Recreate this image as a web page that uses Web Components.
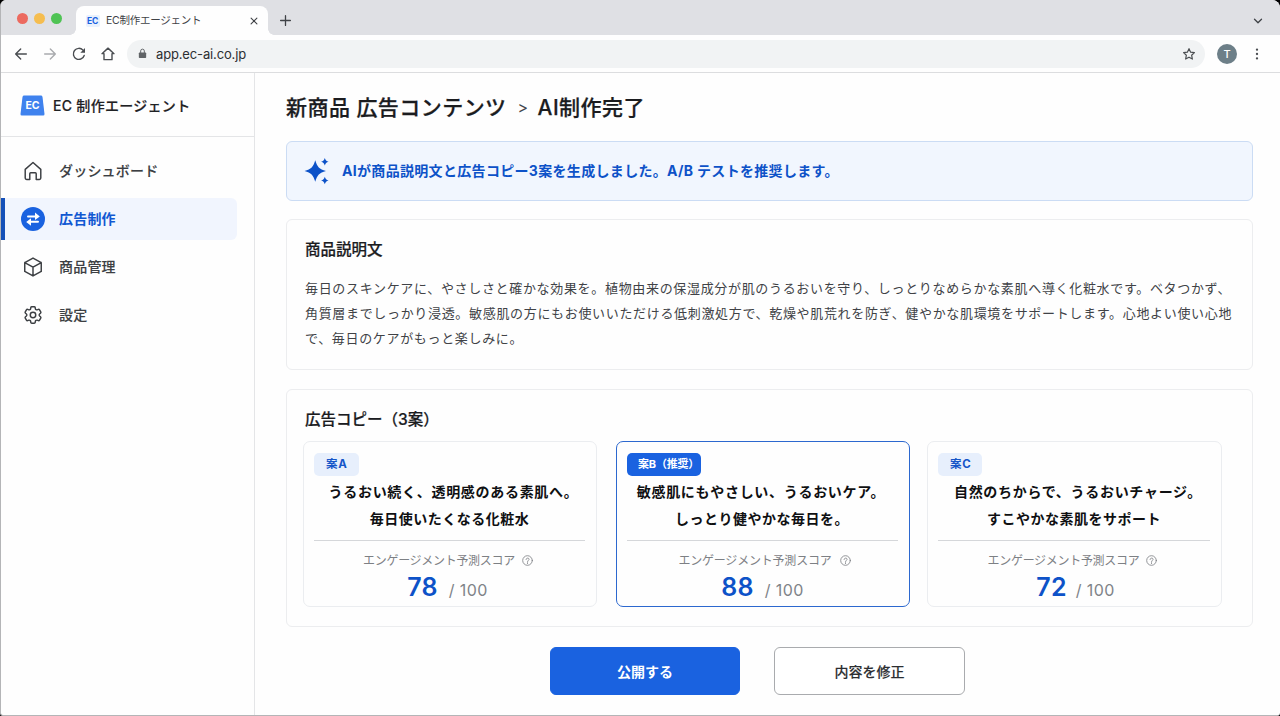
<!DOCTYPE html>
<html lang="ja">
<head>
<meta charset="utf-8">
<title>EC制作エージェント</title>
<style>
  html, body {
    height: 100%;
    margin: 0;
    overflow: hidden;
  }

  body {
    background: #000;
    color: #1f2124;
    font-family: "Inter", "Noto Sans CJK JP", sans-serif;
    font-size: 14px;
  }
</style>
</head>
<body>
<browser-window tab="EC制作エージェント" url="app.ec-ai.co.jp" user="T">
  <app-sidebar slot="sidebar" brand="EC 制作エージェント">
    <nav-item icon="home">ダッシュボード</nav-item>
    <nav-item icon="swap" active>広告制作</nav-item>
    <nav-item icon="box">商品管理</nav-item>
    <nav-item icon="gear">設定</nav-item>
  </app-sidebar>

  <page-title>
    <span>新商品 広告コンテンツ</span>
    <span slot="current">AI制作完了</span>
  </page-title>

  <notice-banner>AIが商品説明文と広告コピー3案を生成しました。A/B テストを推奨します。</notice-banner>

  <content-panel heading="商品説明文" style="--panel-height: 151px">
    <product-text>毎日のスキンケアに、やさしさと確かな効果を。植物由来の保湿成分が肌のうるおいを守り、しっとりなめらかな素肌へ導く化粧水です。ベタつかず、<br>角質層までしっかり浸透。敏感肌の方にもお使いいただける低刺激処方で、乾燥や肌荒れを防ぎ、健やかな肌環境をサポートします。心地よい使い心地<br>で、毎日のケアがもっと楽しみに。</product-text>
  </content-panel>

  <content-panel heading="広告コピー（3案）" style="--panel-height: 238px">
    <copy-list>
      <copy-card badge="案A" score="78">
        <span>うるおい続く、透明感のある素肌へ。</span>
        <span>毎日使いたくなる化粧水</span>
      </copy-card>
      <copy-card badge="案B（推奨）" score="88" recommended>
        <span>敏感肌にもやさしい、うるおいケア。</span>
        <span>しっとり健やかな毎日を。</span>
      </copy-card>
      <copy-card badge="案C" score="72">
        <span>自然のちからで、うるおいチャージ。</span>
        <span>すこやかな素肌をサポート</span>
      </copy-card>
    </copy-list>
  </content-panel>

  <action-bar>
    <ui-button primary>公開する</ui-button>
    <ui-button>内容を修正</ui-button>
  </action-bar>
</browser-window>

<script>
const icons = {
  back: '<path d="M20 12H4M11.5 4.5 4 12l7.5 7.5"/>',
  forward: '<path d="M4 12h16M12.5 4.5 20 12l-7.5 7.5"/>',
  reload: '<path d="M19.8 14.2A8.3 8.3 0 1 1 18 6.2l1.6 1.9"/><path d="M21 3v7h-7z" fill="currentColor" stroke="none"/>',
  house: '<path d="M3 11.5 12 3.2l9 8.3h-3V20.5H6v-9z"/>',
  lock: '<rect x="4" y="10" width="16" height="12" rx="1.6" fill="currentColor" stroke="none"/><path d="M8 10V6.5a4 4 0 0 1 8 0V10"/>',
  star: '<path d="m12 2.8 2.8 6 6.5.8-4.8 4.5 1.3 6.6L12 17.4l-5.8 3.3 1.3-6.6L2.7 9.6l6.5-.8z"/>',
  chevron: '<path d="m5 8.5 7 7 7-7"/>',
  close: '<path d="m5 5 14 14M19 5 5 19"/>',
  plus: '<path d="M12 3v18M3 12h18"/>',
  dots: '<g fill="currentColor" stroke="none"><circle cx="12" cy="4.5" r="2"/><circle cx="12" cy="12" r="2"/><circle cx="12" cy="19.5" r="2"/></g>',
  home: '<path d="M3.5 10.2 12 2.8l8.5 7.4v9.5a1.5 1.5 0 0 1-1.5 1.5h-3.5V15a1 1 0 0 0-1-1h-5a1 1 0 0 0-1 1v6.2H5a1.5 1.5 0 0 1-1.5-1.5z"/>',
  box: '<path d="M12 2.3 21 7.2v9.6L12 21.7 3 16.8V7.2zM3 7.2l9 5 9-5M12 12.2v9.5"/>',
  gear: '<path d="M9.594 3.94c.09-.542.56-.94 1.11-.94h2.593c.55 0 1.02.398 1.11.94l.213 1.281c.063.374.313.686.645.87.074.04.147.083.22.127.325.196.72.257 1.075.124l1.217-.456a1.125 1.125 0 0 1 1.37.49l1.296 2.247a1.125 1.125 0 0 1-.26 1.431l-1.003.827c-.293.241-.438.613-.43.992a7.723 7.723 0 0 1 0 .255c-.008.378.137.75.43.991l1.004.827c.424.35.534.955.26 1.43l-1.298 2.247a1.125 1.125 0 0 1-1.369.491l-1.217-.456c-.355-.133-.75-.072-1.076.124a6.47 6.47 0 0 1-.22.128c-.331.183-.581.495-.644.869l-.213 1.281c-.09.543-.56.94-1.11.94h-2.594c-.55 0-1.019-.398-1.11-.94l-.213-1.281c-.062-.374-.312-.686-.644-.87a6.52 6.52 0 0 1-.22-.127c-.325-.196-.72-.257-1.076-.124l-1.217.456a1.125 1.125 0 0 1-1.369-.49l-1.297-2.247a1.125 1.125 0 0 1 .26-1.431l1.004-.827c.292-.24.437-.613.43-.991a6.932 6.932 0 0 1 0-.255c.007-.38-.138-.751-.43-.992l-1.004-.827a1.125 1.125 0 0 1-.26-1.43l1.297-2.247a1.125 1.125 0 0 1 1.37-.491l1.216.456c.356.133.751.072 1.076-.124.072-.044.146-.086.22-.128.332-.183.582-.495.644-.869l.214-1.28Z"/><circle cx="12" cy="12" r="3"/>',
  swap: '<circle cx="12" cy="12" r="12" fill="#1a62e0" stroke="none"/><path d="M7 9.5h8M17 14.7H9" stroke="#fff" stroke-width="2"/><path d="M14 5.5 18.8 9.5 14 13zM10 11.2 5.2 14.9 10 18.7z" fill="#fff" stroke="none"/>',
  sparkles: '<g fill="currentColor" stroke="none"><path d="M10.5 2.8c1.7 5.8 3.4 7.5 9.2 9.2-5.8 1.7-7.5 3.4-9.2 9.2-1.7-5.8-3.4-7.5-9.2-9.2 5.8-1.7 7.5-3.4 9.2-9.2z"/><path d="M18.7.8c.7 2 1.2 2.5 3.2 3.2-2 .7-2.5 1.2-3.2 3.2-.7-2-1.2-2.5-3.2-3.2 2-.7 2.5-1.2 3.2-3.2zM18.7 16.9c.7 2 1.2 2.5 3.2 3.2-2 .7-2.5 1.2-3.2 3.2-.7-2-1.2-2.5-3.2-3.2 2-.7 2.5-1.2 3.2-3.2z"/></g>',
  help: '<circle cx="12" cy="12" r="10.5"/><path d="M8.8 9.7c.2-4 6.6-4 6.6-.3 0 2.3-3.3 2.5-3.3 5.2M12 16.8v1.9"/>'
}

customElements.define('ui-icon', class extends HTMLElement {
  connectedCallback() {
    this.attachShadow({mode: 'open'})
    this.shadowRoot.innerHTML = `
      <svg viewBox="0 0 24 24">${icons[this.getAttribute('name')]}</svg>
      <style>
        :host {
          display: block;
          flex: none;
          width: var(--size, 16px);
          height: var(--size, 16px);
        }

        svg {
          display: block;
          width: 100%;
          height: 100%;
          overflow: visible;
          fill: none;
          stroke: currentColor;
          stroke-width: var(--stroke, 2);
          stroke-linecap: round;
          stroke-linejoin: round;
        }
      </style>
    `
  }
})

customElements.define('browser-window', class extends HTMLElement {
  connectedCallback() {
    this.attachShadow({mode: 'open'})
    this.shadowRoot.innerHTML = `
      <div class="tabs">
        <div class="lights"><i></i><i></i><i></i></div>
        <div class="tab">
          <b>EC</b>
          <span>${this.getAttribute('tab')}</span>
          <ui-icon name="close"></ui-icon>
        </div>
        <ui-icon class="new" name="plus"></ui-icon>
        <ui-icon class="more" name="chevron"></ui-icon>
      </div>
      <div class="toolbar">
        <ui-icon name="back"></ui-icon>
        <ui-icon class="off" name="forward"></ui-icon>
        <ui-icon name="reload"></ui-icon>
        <ui-icon name="house"></ui-icon>
        <div class="address">
          <ui-icon class="lock" name="lock"></ui-icon>
          <span>${this.getAttribute('url')}</span>
          <ui-icon class="star" name="star"></ui-icon>
        </div>
        <div class="avatar">${this.getAttribute('user')}</div>
        <ui-icon class="dots" name="dots"></ui-icon>
      </div>
      <div class="page">
        <slot name="sidebar"></slot>
        <main><slot></slot></main>
      </div>

      <style>
        :host {
          display: flex;
          flex-direction: column;
          box-sizing: border-box;
          width: 100%;
          height: 100vh;
          overflow: hidden;
          background: #fefefe;
          border: solid #b4b5b7;
          border-width: 0 0 1px 1px;
          border-radius: 6px 8px 3px 3px;
        }

        .tabs {
          display: flex;
          align-items: center;
          flex: none;
          box-sizing: border-box;
          height: 35px;
          padding: 6px 16px 0;
          background: #dfe0e4;
        }

        .lights {
          display: flex;
          gap: 6px;
          width: 59px;
          margin-top: -5px;
        }

        .lights i {
          width: 11px;
          height: 11px;
          border-radius: 50%;
          background: #ec6a5f;
        }

        .lights i:nth-child(2) { background: #f5bd4f; }
        .lights i:nth-child(3) { background: #4fc354; }

        .tab {
          position: relative;
          display: flex;
          align-items: center;
          box-sizing: border-box;
          width: 192px;
          height: 29px;
          padding: 0 9px 0 10px;
          border-radius: 8px 8px 0 0;
          background: #fefefe;
          color: #3f4246;
        }

        /* feet of the tab */
        .tab::before,
        .tab::after {
          content: "";
          position: absolute;
          bottom: 0;
          width: 6px;
          height: 6px;
        }

        .tab::before {
          left: -6px;
          background: radial-gradient(circle at 0 0, transparent 5.5px, #fefefe 6px);
        }

        .tab::after {
          right: -6px;
          background: radial-gradient(circle at 100% 0, transparent 5.5px, #fefefe 6px);
        }

        .tab b {
          width: 13px;
          padding-left: 1px;
          border-radius: 2px;
          background: #e9f1fd;
          color: #1a62e0;
          font-size: 8.5px;
          font-weight: 700;
          letter-spacing: -0.2px;
          line-height: 12px;
        }

        .tab span {
          flex: 1;
          padding-left: 6px;
          font-size: 10.5px;
          letter-spacing: -0.25px;
          line-height: 16px;
        }

        .tab ui-icon {
          --size: 10px;
          --stroke: 2.6;
        }

        .new {
          --size: 13px;
          --stroke: 2.4;
          margin-left: 11px;
          color: #3f4246;
        }

        .more {
          --size: 12px;
          --stroke: 2.6;
          margin: 1px 0 0 auto;
          color: #3f4246;
        }

        .toolbar {
          display: flex;
          align-items: center;
          gap: 13px;
          flex: none;
          box-sizing: border-box;
          height: 38px;
          padding: 0 16px 0 12px;
          border-bottom: 1px solid #dcdddf;
          background: #fefefe;
          color: #4a4d51;
          --stroke: 2.1;
        }

        .off { color: #a9abae; }

        .address {
          display: flex;
          align-items: center;
          flex: 1;
          box-sizing: border-box;
          height: 28px;
          margin-left: -2px;
          padding: 0 9px 0 10px;
          border-radius: 14px;
          background: #f1f3f4;
        }

        .address span {
          flex: 1;
          padding-left: 8px;
          color: #2c2e31;
          font-size: 13px;
          letter-spacing: -0.15px;
        }

        .lock {
          --size: 11px;
          color: #606366;
        }

        .star {
          --size: 14px;
          --stroke: 2;
        }

        .avatar {
          width: 20px;
          height: 20px;
          margin-left: -1px;
          border-radius: 50%;
          background: #6d7f88;
          color: #fff;
          font-size: 11px;
          font-weight: 500;
          line-height: 20px;
          text-align: center;
        }

        .dots { --size: 14px; }

        .page {
          display: flex;
          flex: 1;
          min-height: 0;
        }

        main {
          flex: 1;
          padding: 19px 27px 0 31px;
        }
      </style>
    `
  }
})

customElements.define('app-sidebar', class extends HTMLElement {
  connectedCallback() {
    this.attachShadow({mode: 'open'})
    this.shadowRoot.innerHTML = `
      <header>
        <svg width="25" height="21" viewBox="0 0 25 21">
          <path d="M4.2.5h16.6q1.5 0 1.7 1.4L24.5 19q.1 1.5-1.3 1.5H1.8Q.4 20.5.5 19L2.5 1.9Q2.7.5 4.2.5z" fill="#3f82ee"/>
          <text x="12.5" y="14.4" text-anchor="middle" font-size="10.5" font-weight="700" fill="#fff">EC</text>
        </svg>
        <span>${this.getAttribute('brand')}</span>
      </header>
      <nav><slot></slot></nav>

      <style>
        :host {
          display: block;
          box-sizing: border-box;
          width: 254px;
          border-right: 1px solid #e4e5e7;
        }

        header {
          display: flex;
          align-items: center;
          box-sizing: border-box;
          height: 64px;
          padding-left: 19px;
          border-bottom: 1px solid #e4e5e7;
        }

        svg { margin-top: 1px; }

        span {
          padding-left: 8px;
          font-weight: 500;
          letter-spacing: 0.3px;
          -webkit-text-stroke: 0.15px;
        }

        nav {
          display: flex;
          flex-direction: column;
          gap: 6px;
          padding: 13px 17px 0 0;
        }
      </style>
    `
  }
})

customElements.define('nav-item', class extends HTMLElement {
  connectedCallback() {
    this.attachShadow({mode: 'open'})
    this.shadowRoot.innerHTML = `
      <ui-icon name="${this.getAttribute('icon')}"></ui-icon>
      <span><slot></slot></span>

      <style>
        :host {
          display: flex;
          align-items: center;
          gap: 14.5px;
          box-sizing: border-box;
          height: 42px;
          padding-left: 19.5px;
          color: #3c3f43;
          font-weight: 500;
          letter-spacing: 0.2px;
          --size: 22px;
          --stroke: 1.6;
        }

        :host(:not([active])) ui-icon { margin: 0 1px; }

        span {
          padding-bottom: 2px;
          -webkit-text-stroke: 0.12px;
        }

        :host([active]) {
          --size: 24px;
          padding-left: 15.5px;
          border-left: 4px solid #1450b8;
          border-radius: 0 6px 6px 0;
          background: #f1f5fe;
          color: #1158d2;
          font-weight: 700;
        }

        :host([active]) span { -webkit-text-stroke: 0; }
      </style>
    `
  }
})

customElements.define('page-title', class extends HTMLElement {
  connectedCallback() {
    this.attachShadow({mode: 'open'})
    this.shadowRoot.innerHTML = `
      <slot></slot><i>&gt;</i><slot name="current"></slot>

      <style>
        :host {
          display: flex;
          align-items: center;
          height: 28px;
          padding-bottom: 1px;
          margin-bottom: 20px;
          color: #1b1c1f;
          font-size: 21px;
          font-weight: 500;
          letter-spacing: 0.45px;
          -webkit-text-stroke: 0.25px;
        }

        i {
          margin: 2px 9px 0 11px;
          color: #44474b;
          font-size: 16px;
          font-style: normal;
          font-weight: 400;
          -webkit-text-stroke: 0;
        }
      </style>
    `
  }
})

customElements.define('notice-banner', class extends HTMLElement {
  connectedCallback() {
    this.attachShadow({mode: 'open'})
    this.shadowRoot.innerHTML = `
      <ui-icon name="sparkles"></ui-icon>
      <span><slot></slot></span>

      <style>
        :host {
          display: flex;
          align-items: center;
          gap: 11px;
          box-sizing: border-box;
          height: 60px;
          margin-bottom: 18px;
          padding-left: 16px;
          border: 1px solid #cbdcf4;
          border-radius: 6px;
          background: #f1f6fe;
          color: #0d52c8;
          font-weight: 700;
          letter-spacing: 0.32px;
          --size: 28px;
        }

        span { padding-bottom: 2px; }
      </style>
    `
  }
})

customElements.define('content-panel', class extends HTMLElement {
  connectedCallback() {
    this.attachShadow({mode: 'open'})
    this.shadowRoot.innerHTML = `
      <h2>${this.getAttribute('heading')}</h2>
      <slot></slot>

      <style>
        :host {
          display: block;
          box-sizing: border-box;
          height: var(--panel-height);
          margin-bottom: 19px;
          padding: 17px 17px 0 18px;
          border: 1px solid #ecedef;
          border-radius: 6px;
        }

        h2 {
          margin: 0;
          color: #1b1c1f;
          font-size: 15.5px;
          font-weight: 500;
          line-height: 26px;
          -webkit-text-stroke: 0.22px;
        }
      </style>
    `
  }
})

customElements.define('product-text', class extends HTMLElement {
  connectedCallback() {
    this.attachShadow({mode: 'open'})
    this.shadowRoot.innerHTML = `
      <slot></slot>

      <style>
        :host {
          display: block;
          margin-top: 13px;
          color: #404246;
          font-size: 13px;
          letter-spacing: 0.67px;
          line-height: 25px;
          white-space: nowrap;
        }
      </style>
    `
  }
})

customElements.define('copy-list', class extends HTMLElement {
  connectedCallback() {
    this.attachShadow({mode: 'open'})
    this.shadowRoot.innerHTML = `
      <slot></slot>

      <style>
        :host {
          display: grid;
          grid-template-columns: 294px 296px 1fr;
          gap: 17px;
          margin: 8px 13px 0 -2px;
        }
      </style>
    `
  }
})

customElements.define('copy-card', class extends HTMLElement {
  connectedCallback() {
    this.attachShadow({mode: 'open'})
    this.shadowRoot.innerHTML = `
      <em>${this.getAttribute('badge')}</em>
      <div class="copy"><slot></slot></div>
      <hr>
      <div class="label"><span>エンゲージメント予測スコア</span><ui-icon name="help"></ui-icon></div>
      <div class="score"><b>${this.getAttribute('score')}</b><span>/ 100</span></div>

      <style>
        :host {
          display: flex;
          flex-direction: column;
          box-sizing: border-box;
          height: 166px;
          padding: 11px 11px 0 10px;
          border: 1px solid #ebedf0;
          border-radius: 7px;
        }

        :host([recommended]) {
          margin-left: 2px;
          border-color: #2c68cf;
        }

        em {
          align-self: flex-start;
          padding: 0 11px 0 12px;
          border-radius: 5px;
          background: #e7effc;
          color: #1555c8;
          font-size: 11.5px;
          font-style: normal;
          font-weight: 700;
          letter-spacing: 0.7px;
          line-height: 23px;
        }

        :host([recommended]) em {
          padding: 0 2px 0 11px;
          background: #1a62e0;
          color: #fff;
          font-size: 11px;
          letter-spacing: -0.2px;
        }

        .copy {
          display: flex;
          flex-direction: column;
          align-items: center;
          margin-top: 2px;
          color: #0f1012;
          font-weight: 700;
          letter-spacing: 0.5px;
          line-height: 27px;
        }

        .copy ::slotted(:first-child) {
          padding-left: 8px;
          letter-spacing: 0.7px;
        }

        :host([recommended]) .copy { padding-right: 5px; }
        :host([recommended]) .copy ::slotted(:first-child) { padding-left: 2px; }
        :host([recommended]) .copy ::slotted(:last-child) { padding-left: 4px; }

        hr {
          width: 100%;
          margin: 8px 0 9px;
          border: 0;
          border-top: 1px solid #d5d7da;
        }

        .label {
          display: flex;
          align-items: center;
          justify-content: center;
          gap: 7px;
          padding-right: 3px;
          color: #7d8084;
          font-size: 12px;
          letter-spacing: -0.3px;
          line-height: 20px;
          --size: 11px;
          --stroke: 1.8;
        }

        .label span { padding-top: 1px; }
        .label ui-icon { margin-top: -1px; }

        :host([recommended]) .label {
          gap: 8px;
          padding: 0 0 0 4px;
          letter-spacing: -0.2px;
        }

        .score {
          display: flex;
          align-items: baseline;
          justify-content: center;
          gap: 11px;
          margin-top: -1px;
          color: #808388;
          font-size: 16px;
          font-weight: 400;
          letter-spacing: 0.4px;
          line-height: 34px;
        }

        :host(:first-child) .score { padding-right: 4px; }

        :host(:last-child) .score {
          gap: 9px;
          padding-left: 3px;
        }

        .score b {
          color: #0d52c8;
          font-size: 25px;
          font-weight: 600;
          letter-spacing: 0.2px;
        }
      </style>
    `
  }
})

customElements.define('action-bar', class extends HTMLElement {
  connectedCallback() {
    this.attachShadow({mode: 'open'})
    this.shadowRoot.innerHTML = `
      <slot></slot>

      <style>
        :host {
          display: flex;
          justify-content: center;
          gap: 34px;
          padding: 1px 24px 0 0;
        }
      </style>
    `
  }
})

customElements.define('ui-button', class extends HTMLElement {
  connectedCallback() {
    this.attachShadow({mode: 'open'})
    this.shadowRoot.innerHTML = `
      <button><slot></slot></button>

      <style>
        :host { display: block; }

        button {
          display: block;
          box-sizing: border-box;
          width: 191px;
          height: 48px;
          padding: 0;
          border: 1px solid #a9abae;
          border-radius: 6px;
          background: #fff;
          color: #2c2e31;
          font: inherit;
          font-weight: 500;
          -webkit-text-stroke: 0.12px;
        }

        :host([primary]) button {
          width: 190px;
          border-color: #1a62e0;
          background: #1a62e0;
          color: #fff;
          font-weight: 700;
          -webkit-text-stroke: 0;
        }
      </style>
    `
  }
})
</script>
</body>
</html>
